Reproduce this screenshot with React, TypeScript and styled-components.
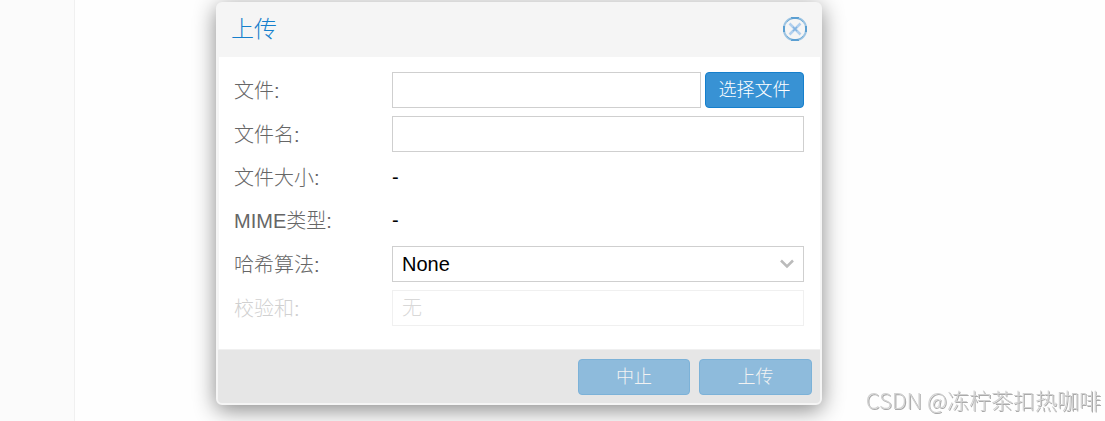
import React from "react";
import styled, { createGlobalStyle } from "styled-components";

const GlobalStyle = createGlobalStyle`
  * { box-sizing: border-box; }
  body {
    margin: 0;
    background: #fefefe;
    color: #000;
    font: 300 20px/24px "Liberation Sans", "Noto Sans CJK SC", sans-serif;
  }
  button, input, select { font: inherit; color: inherit; margin: 0; }
`;

const Page = styled.div`
  display: flex;
  min-height: 100vh;
`;

const Sidebar = styled.aside`
  flex: 0 0 75px;
  background: #fbfbfb;
  border-right: 1px solid #f0f0f0;
`;

const Main = styled.main`
  flex: 1;
  min-width: 0;
  padding: 2px 283px 16px 141px;
`;

const Dialog = styled.section`
  border: 2px solid #f5f5f5;
  border-radius: 6px;
  background: #f5f5f5;
  box-shadow: 0 5px 22px #888;
`;

const Header = styled.header`
  display: flex;
  align-items: center;
  justify-content: space-between;
  height: 53px;
  padding: 0 13px 4px;
`;

const Title = styled.h1`
  margin: 0;
  color: #157fcc;
  font-size: 23px;
  font-weight: 300;
  line-height: 32px;
`;

const CloseButton = styled.button`
  display: flex;
  padding: 0;
  border: 0;
  background: none;
  cursor: pointer;
`;

const Form = styled.form`
  display: flex;
  flex-direction: column;
  gap: 8px;
  margin-left: 1px;
  padding: 15px 16px 23px 15px;
  background: #fff;
`;

const Row = styled.div<{ $disabled?: boolean }>`
  display: flex;
  align-items: center;
  opacity: ${(p) => (p.$disabled ? 0.3 : 1)};
`;

const Label = styled.label`
  flex: 0 0 158px;
  padding-top: 1px;
  color: #666;
`;

const Field = styled.div`
  display: flex;
  flex: 1;
  gap: 4px;
  min-width: 0;
  position: relative;
`;

const TextInput = styled.input`
  flex: 1;
  min-width: 0;
  height: 36px;
  padding: 0 9px;
  border: 1px solid #cfcfcf;
  border-radius: 0;
  background: #fff;
  outline: none;
  &::placeholder { color: #808080; opacity: 1; }
`;

const Value = styled.output`
  line-height: 35px;
`;

const Select = styled.select`
  flex: 1;
  height: 36px;
  padding: 0 36px 0 9px;
  border: 1px solid #cfcfcf;
  border-radius: 0;
  background: #fff;
  appearance: none;
`;

const Chevron = styled.svg`
  position: absolute;
  right: 10px;
  top: 11px;
  pointer-events: none;
`;

const Button = styled.button<{ $width: number }>`
  width: ${(p) => p.$width}px;
  height: 36px;
  padding: 0;
  border: 1px solid #157fcc;
  border-radius: 4px;
  background: #3892d4;
  color: #fff;
  font-size: 18px;
  &:disabled { opacity: 0.5; }
`;

const Footer = styled.footer`
  display: flex;
  justify-content: flex-end;
  gap: 9px;
  padding: 9px 8px 8px;
  border-top: 1px solid #f0f0f0;
  border-radius: 0 0 4px 4px;
  background: #e6e6e6;
`;

const Watermark = styled.div`
  position: fixed;
  right: 4px;
  bottom: 6px;
  color: #d2d2d2;
  font: 300 22px/32px "Noto Sans CJK SC", sans-serif;
  text-shadow: 1px 1px 0 #aaa;
`;

export default function App() {
  return (
    <Page>
      <GlobalStyle />
      <Sidebar />
      <Main>
        <Dialog role="dialog" aria-labelledby="title">
          <Header>
            <Title id="title">上传</Title>
            <CloseButton type="button" aria-label="关闭">
              <svg width="24" height="24" viewBox="0 0 24 24" fill="none">
                <rect x="1" y="1" width="22" height="22" rx="10" stroke="#9cc4e3" strokeWidth="2" />
                <path d="M8 1h8M8 23h8M1 9v6M23 9v6" stroke="#5b9fd2" strokeWidth="2" />
                <path d="M4 5Q6 2 9 1.500M20 5Q18 2 15 1.500M4 19Q6 22 9 22.500M20 19Q18 22 15 22.500" stroke="#79b0d9" />
                <path d="M6.500 6.500l11 11M17.500 6.500l-11 11" stroke="#b0cfee" strokeWidth="2.500" />
                <path d="M10 10l4 4M14 10l-4 4" stroke="#84b4e0" strokeWidth="1.500" />
              </svg>
            </CloseButton>
          </Header>
          <Form id="upload">
            <Row>
              <Label htmlFor="file">文件:</Label>
              <Field>
                <TextInput id="file" readOnly />
                <Button type="button" $width={99}>选择文件</Button>
              </Field>
            </Row>
            <Row>
              <Label htmlFor="name">文件名:</Label>
              <Field><TextInput id="name" /></Field>
            </Row>
            <Row>
              <Label htmlFor="size">文件大小:</Label>
              <Value id="size">-</Value>
            </Row>
            <Row>
              <Label htmlFor="mime">MIME类型:</Label>
              <Value id="mime">-</Value>
            </Row>
            <Row>
              <Label htmlFor="hash">哈希算法:</Label>
              <Field>
                <Select id="hash" defaultValue="None">
                  <option>None</option>
                  <option>MD5</option>
                  <option>SHA256</option>
                </Select>
                <Chevron width="14" height="14" viewBox="0 0 14 14" fill="none">
                  <path d="M1 3.500L7 9.500L13 3.500" stroke="#bbb" strokeWidth="2.500" />
                </Chevron>
              </Field>
            </Row>
            <Row $disabled>
              <Label htmlFor="checksum">校验和:</Label>
              <Field><TextInput id="checksum" placeholder="无" disabled /></Field>
            </Row>
          </Form>
          <Footer>
            <Button type="button" $width={112} disabled>中止</Button>
            <Button type="submit" form="upload" $width={113} disabled>上传</Button>
          </Footer>
        </Dialog>
      </Main>
      <Watermark>CSDN @冻柠茶扣热咖啡</Watermark>
    </Page>
  );
}
